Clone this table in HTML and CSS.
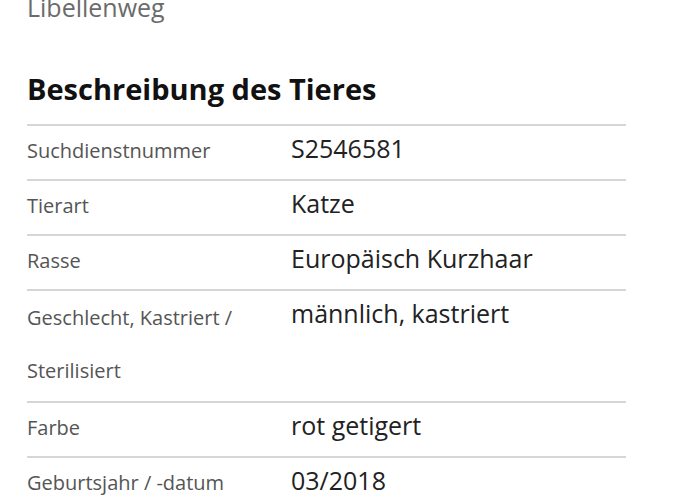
FILE: index.html
```html
<!DOCTYPE html>
<html lang="de">
<head>
<meta charset="utf-8">
<link rel="stylesheet" href="styles.css">
</head>
<body>
<div class="page">
  <p class="street">Libellenweg</p>
  <h2 class="title">Beschreibung des Tieres</h2>
  <div class="table">
    <div class="row"><div class="label">Suchdienstnummer</div><div class="value">S2546581</div></div>
    <div class="row"><div class="label">Tierart</div><div class="value">Katze</div></div>
    <div class="row"><div class="label">Rasse</div><div class="value">Europäisch Kurzhaar</div></div>
    <div class="row"><div class="label tall">Geschlecht, Kastriert / Sterilisiert</div><div class="value">männlich, kastriert</div></div>
    <div class="row"><div class="label">Farbe</div><div class="value">rot getigert</div></div>
    <div class="row"><div class="label">Geburtsjahr / -datum</div><div class="value">03/2018</div></div>
  </div>
</div>
</body>
</html>
```
FILE: styles.css
```css
html, body { margin: 0; padding: 0; background: #fff; }
body { font-family: "Open Sans", sans-serif; }
.page { padding: 0 74px 0 27px; margin-top: -11px; }
.street { margin: 0; font-size: 25px; line-height: 36px; color: #6b6b6b; }
.title { margin: 44px 0 0; font-size: 29px; line-height: 40px; font-weight: 700; color: #111; }
.table { margin-top: 15px; }
.row { display: grid; grid-template-columns: 264px 1fr; border-top: 2px solid #d6d6d6; align-items: start; }
.label { font-size: 20px; line-height: 49px; padding-bottom: 4px; color: #555; }
.label.tall { width: 245px; line-height: 53px; }
.value { font-size: 25px; line-height: 44px; color: #222; }
```
